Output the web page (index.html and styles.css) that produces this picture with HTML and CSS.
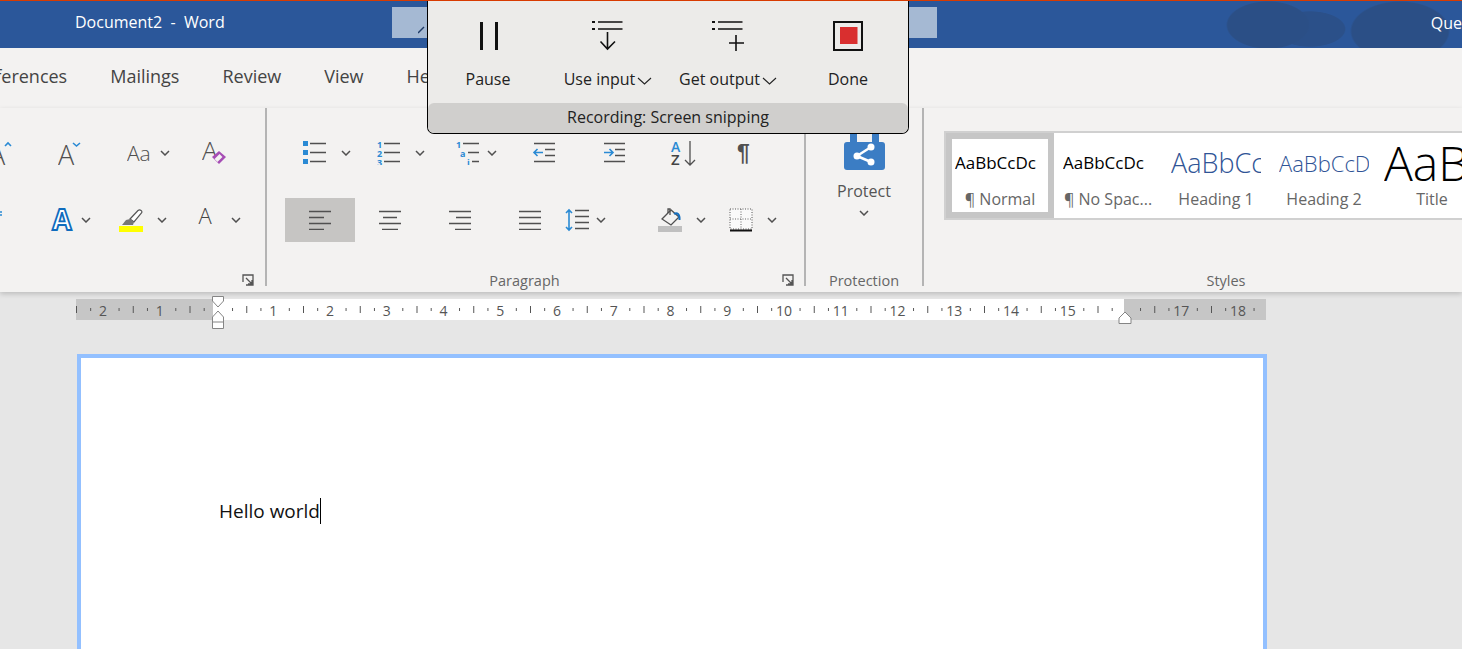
FILE: index.html
```html
<!DOCTYPE html>
<html lang="en">
<head>
    <meta charset="UTF-8">
    <meta name="viewport" content="width=device-width, initial-scale=1.0">
    <title>Document2 - Word</title>
    <link rel="stylesheet" href="styles.css">
</head>
<body>
<div class="app">

    <header class="titlebar">
        <div class="doc-title">Document2&nbsp; -&nbsp; Word</div>
        <div class="searchbox">
            <svg width="8" height="8" viewBox="0 0 8 8"><path d="M0 7 6 1" class="stroke-navy"/></svg>
        </div>
        <div class="account">Que</div>
    </header>

    <nav class="tabs">
        <span class="tab tab-first">References</span>
        <span class="tab">Mailings</span>
        <span class="tab">Review</span>
        <span class="tab">View</span>
        <span class="tab">Help</span>
    </nav>

    <section class="ribbon">

        <!-- font group, scrolled off to the left -->
        <div class="group group-font">
            <div class="row font-row-1">
                <div class="tool">
                    <svg width="12" height="24" viewBox="0 0 12 24"><text x="-11" y="24" class="glyph-a">A</text><path d="M5 5 8 2 11 5" class="stroke-blue"/></svg>
                </div>
                <div class="tool">
                    <svg width="24" height="24" viewBox="0 0 24 24"><text x="0" y="24" class="glyph-a">A</text><path d="M15 2 18.500 5 22 2" class="stroke-blue"/></svg>
                </div>
                <div class="tool tool-tight">
                    <svg width="26" height="24" viewBox="0 0 26 24"><text x="0" y="20" class="glyph-case">Aa</text></svg>
                    <svg class="chev" viewBox="0 0 10 6"><path d="M1 1 5 5 9 1"/></svg>
                </div>
                <div class="tool">
                    <svg width="26" height="26" viewBox="0 0 26 26"><text x="0" y="20" class="glyph-clear">A</text><path d="M10 17 17 11 24 17 17 24Z" class="eraser"/><path d="M14 20.500 19 15.500" class="eraser-mark"/></svg>
                </div>
            </div>
            <div class="row font-row-2">
                <div class="tool">
                    <svg width="3" height="24" viewBox="0 0 3 24"><path d="M0 4H2M0 7H2" class="stroke-blue"/></svg>
                </div>
                <div class="tool tool-tight">
                    <svg width="24" height="26" viewBox="0 0 24 26"><text x="12" y="23" class="glyph-effects">A</text></svg>
                    <svg class="chev" viewBox="0 0 10 6"><path d="M1 1 5 5 9 1"/></svg>
                </div>
                <div class="tool">
                    <svg width="24" height="24" viewBox="0 0 24 24">
                        <path d="M11 11 19 2.500C21 1 24 3 22.500 5L15 14Z" class="pen"/>
                        <path d="M3 17 7 12 11 11 15 14 14 17Z" class="pen-tip"/>
                        <rect x="0" y="18" width="24" height="6" class="fill-yellow"/>
                    </svg>
                    <svg class="chev" viewBox="0 0 10 6"><path d="M1 1 5 5 9 1"/></svg>
                </div>
                <div class="tool">
                    <svg width="24" height="24" viewBox="0 0 24 24">
                        <text x="12" y="16" class="glyph-color">A</text>
                        <rect x="0" y="18" width="24" height="6"/>
                    </svg>
                    <svg class="chev" viewBox="0 0 10 6"><path d="M1 1 5 5 9 1"/></svg>
                </div>
            </div>
            <footer class="group-foot">
                <span class="group-label"></span>
                <svg class="launcher" viewBox="0 0 12 12"><path d="M1 8V1H11V11H4M4 4 10 10M6 10H10V6"/></svg>
            </footer>
        </div>

        <div class="group group-paragraph">
            <div class="row para-row-1">
                <div class="tool">
                    <svg width="24" height="24" viewBox="0 0 24 24">
                        <path d="M0 0H5V5H0ZM0 9H5V14H0ZM0 18H5V23H0Z" class="fill-blue"/>
                        <path d="M7 2.500H23M7 11.500H23M7 20.500H23" class="stroke-line"/>
                    </svg>
                    <svg class="chev" viewBox="0 0 10 6"><path d="M1 1 5 5 9 1"/></svg>
                </div>
                <div class="tool">
                    <svg width="24" height="24" viewBox="0 0 24 24">
                        <text x="0" y="7" class="glyph-num">1</text>
                        <text x="0" y="16" class="glyph-num">2</text>
                        <text x="0" y="25" class="glyph-num">3</text>
                        <path d="M7 2.500H23M7 11.500H23M7 20.500H23" class="stroke-line"/>
                    </svg>
                    <svg class="chev" viewBox="0 0 10 6"><path d="M1 1 5 5 9 1"/></svg>
                </div>
                <div class="tool tool-tight">
                    <svg width="24" height="24" viewBox="0 0 24 24">
                        <text x="0" y="7" class="glyph-num">1</text>
                        <text x="4" y="16" class="glyph-num">a</text>
                        <text x="11" y="25" class="glyph-num">i</text>
                        <path d="M7 2.500H23M12 11.500H23M16 20.500H23" class="stroke-line"/>
                    </svg>
                    <svg class="chev" viewBox="0 0 10 6"><path d="M1 1 5 5 9 1"/></svg>
                </div>
                <div class="tool">
                    <svg width="24" height="24" viewBox="0 0 24 24">
                        <path d="M2 2.500H23M13 8.500H23M13 14.500H23M2 20.500H23" class="stroke-line"/>
                        <path d="M11 11.500H2M5.500 8 2 11.500 5.500 15" class="stroke-blue"/>
                    </svg>
                </div>
                <div class="tool">
                    <svg width="24" height="24" viewBox="0 0 24 24">
                        <path d="M2 2.500H23M13 8.500H23M13 14.500H23M2 20.500H23" class="stroke-line"/>
                        <path d="M2 11.500H11M7.500 8 11 11.500 7.500 15" class="stroke-blue"/>
                    </svg>
                </div>
                <div class="tool">
                    <svg width="26" height="25" viewBox="0 0 26 25">
                        <text x="1" y="11" class="glyph-sort-a">A</text>
                        <text x="1" y="24" class="glyph-sort-z">Z</text>
                        <path d="M20 0V24M15 19 20 24 25 19" class="stroke-line"/>
                    </svg>
                </div>
                <div class="tool">
                    <span class="pilcrow">¶</span>
                </div>
            </div>
            <div class="row para-row-2">
                <div class="align-btn align-active">
                    <svg width="22" height="20" viewBox="0 0 22 20"><path d="M0 1.500H22M0 7.500H15M0 13.500H22M0 19.500H15" class="stroke-line"/></svg>
                </div>
                <div class="align-btn">
                    <svg width="22" height="20" viewBox="0 0 22 20"><path d="M0 1.500H22M4 7.500H18M0 13.500H22M3 19.500H19" class="stroke-line"/></svg>
                </div>
                <div class="align-btn">
                    <svg width="22" height="20" viewBox="0 0 22 20"><path d="M0 1.500H22M7 7.500H22M0 13.500H22M6 19.500H22" class="stroke-line"/></svg>
                </div>
                <div class="align-btn">
                    <svg width="22" height="20" viewBox="0 0 22 20"><path d="M0 1.500H22M0 7.500H22M0 13.500H22M0 19.500H22" class="stroke-line"/></svg>
                </div>
                <div class="tool tool-tight">
                    <svg width="24" height="24" viewBox="0 0 24 24">
                        <path d="M4 2V22M1 5 4 2 7 5M1 19 4 22 7 19" class="stroke-blue"/>
                        <path d="M10 2.500H24M10 8.500H24M10 14.500H24M10 20.500H24" class="stroke-line"/>
                    </svg>
                    <svg class="chev" viewBox="0 0 10 6"><path d="M1 1 5 5 9 1"/></svg>
                </div>
                <div class="tool">
                    <svg width="24" height="24" viewBox="0 0 24 24">
                        <path d="M4 11 13 2 21 9 13 17Z" class="stroke-line"/>
                        <path d="M10 5V1H12V7" class="stroke-line"/>
                        <path d="M16 6C19 4 22 6 21.500 12" class="stroke-curl"/>
                        <rect x="0" y="18" width="24" height="6" class="fill-grey"/>
                    </svg>
                    <svg class="chev" viewBox="0 0 10 6"><path d="M1 1 5 5 9 1"/></svg>
                </div>
                <div class="tool">
                    <svg width="24" height="24" viewBox="0 0 24 24">
                        <rect x="1" y="1" width="22" height="20" class="box-dotted"/>
                        <path d="M12 1V21M1 11H23" class="stroke-dotted"/>
                        <path d="M1 22.500H23" class="stroke-black"/>
                    </svg>
                    <svg class="chev" viewBox="0 0 10 6"><path d="M1 1 5 5 9 1"/></svg>
                </div>
            </div>
            <footer class="group-foot">
                <span class="group-label">Paragraph</span>
                <svg class="launcher" viewBox="0 0 12 12"><path d="M1 8V1H11V11H4M4 4 10 10M6 10H10V6"/></svg>
            </footer>
        </div>

        <div class="group group-protection">
            <div class="protect">
                <svg width="41" height="41" viewBox="0 0 41 41">
                    <path d="M6 12V0H13V12M28 12V0H35V12" class="fill-lock"/>
                    <rect x="0" y="12" width="41" height="28" rx="3" class="fill-lock"/>
                    <path d="M13 26 27 17M13 26 27 32" class="stroke-share"/>
                    <circle cx="13" cy="26" r="3.500" class="fill-white"/>
                    <circle cx="27" cy="17" r="3.500" class="fill-white"/>
                    <circle cx="27" cy="32" r="3.500" class="fill-white"/>
                </svg>
                <span class="protect-label">Protect</span>
                <svg class="chev" viewBox="0 0 10 6"><path d="M1 1 5 5 9 1"/></svg>
            </div>
            <footer class="group-foot">
                <span class="group-label">Protection</span>
            </footer>
        </div>

        <div class="group group-styles">
            <div class="gallery">
                <div class="style-cell style-selected">
                    <div class="style-preview preview-body">AaBbCcDc</div>
                    <div class="style-name">¶ Normal</div>
                </div>
                <div class="style-cell">
                    <div class="style-preview preview-body">AaBbCcDc</div>
                    <div class="style-name">¶ No Spac...</div>
                </div>
                <div class="style-cell">
                    <div class="style-preview preview-h1">AaBbCcD</div>
                    <div class="style-name">Heading 1</div>
                </div>
                <div class="style-cell">
                    <div class="style-preview preview-h2">AaBbCcDc</div>
                    <div class="style-name">Heading 2</div>
                </div>
                <div class="style-cell">
                    <div class="style-preview preview-title">AaB</div>
                    <div class="style-name">Title</div>
                </div>
            </div>
            <footer class="group-foot">
                <span class="group-label">Styles</span>
            </footer>
        </div>
    </section>

    <main class="workspace">
        <div class="ruler">
            <span class="rn">2</span><span class="rn">1</span><span class="rn"></span><span class="rn">1</span><span class="rn">2</span><span class="rn">3</span><span class="rn">4</span><span class="rn">5</span><span class="rn">6</span><span class="rn">7</span><span class="rn">8</span><span class="rn">9</span><span class="rn">10</span><span class="rn">11</span><span class="rn">12</span><span class="rn">13</span><span class="rn">14</span><span class="rn">15</span><span class="rn"></span><span class="rn">17</span><span class="rn">18</span>

            <svg class="marker-left" width="14" height="33" viewBox="0 0 14 33">
                <path d="M1.500 .5H12.500V5L7 11 1.500 5Z" class="marker"/>
                <path d="M7 15 12.500 21V32.500H1.500V21Z" class="marker"/>
                <path d="M1.500 26H12.500" class="marker"/>
            </svg>
            <svg class="marker-right" width="14" height="13" viewBox="0 0 14 13">
                <path d="M7 1 13 7V12.500H1V7Z" class="marker"/>
            </svg>
        </div>

        <div class="page">
            <span class="page-text">Hello world</span>
        </div>
    </main>

    <!-- floating recorder bar sits over the ribbon -->
    <aside class="recorder">
        <div class="recorder-btns">
            <div class="rec-btn">
                <svg width="32" height="32" viewBox="0 0 32 32"><path d="M8 2H11V30H8ZM23 2H26V30H23Z" class="fill-black"/></svg>
                <span class="rec-label">Pause</span>
            </div>
            <div class="rec-btn">
                <svg width="32" height="32" viewBox="0 0 32 32">
                    <path d="M0 1H3V3H0ZM0 8H3V10H0Z" class="fill-black"/>
                    <path d="M6 2H30.500M6 9H30.500M15.500 12V29M8.500 21.500 15.500 29 23 21.500" class="stroke-rec"/>
                </svg>
                <span class="rec-label">Use input<svg class="rec-chev" viewBox="0 0 15 8"><path d="M1 1 7.500 7 14 1"/></svg></span>
            </div>
            <div class="rec-btn">
                <svg width="32" height="32" viewBox="0 0 32 32">
                    <path d="M0 1H3V3H0ZM0 8H3V10H0Z" class="fill-black"/>
                    <path d="M6 2H30.500M6 9H30.500M24 15V31M17 23H32" class="stroke-rec"/>
                </svg>
                <span class="rec-label">Get output<svg class="rec-chev" viewBox="0 0 15 8"><path d="M1 1 7.500 7 14 1"/></svg></span>
            </div>
            <div class="rec-btn">
                <svg width="32" height="32" viewBox="0 0 32 32">
                    <rect x="2" y="2" width="28" height="28" class="done-box"/>
                    <rect x="8" y="7" width="17.500" height="17" class="fill-red"/>
                </svg>
                <span class="rec-label">Done</span>
            </div>
        </div>
        <div class="recorder-status">Recording: Screen snipping</div>
    </aside>

</div>
</body>
</html>
```

FILE: styles.css
```css
html, body {
    margin: 0;
    height: 100%;
}

body {
    font-family: "Open Sans", "Noto Sans", sans-serif;
    background-color: #e6e6e6;
    color: #444;
}

.app {
    position: relative;
    height: 100vh;
    overflow: hidden;
}

svg {
    display: block;
    flex: none;
    fill: none;
}

/* title bar */
.titlebar {
    display: flex;
    height: 47px;
    border-top: 1px solid #d83b01;
    color: #fff;
    background:
        radial-gradient(ellipse 42px 24px at 1268px 24px, #2b4f86 96%, transparent),
        radial-gradient(ellipse 36px 18px at 1310px 28px, #2b5089 96%, transparent),
        radial-gradient(ellipse 50px 30px at 1400px 30px, #2b4f86 96%, transparent),
        #2b579a;
}

.doc-title {
    width: 319px;
    margin-left: 75px;
    font-size: 16px;
    line-height: 42px;
}

.searchbox {
    display: flex;
    align-items: flex-end;
    width: 548px;
    height: 31px;
    margin-top: 6px;
    padding: 0 0 4px 26px;
    box-sizing: border-box;
    background-color: #a5b9d3;
}

.account {
    margin-left: 494px;
    font-size: 16px;
    line-height: 44px;
}

/* tabs */
.tabs {
    display: flex;
    gap: 43px;
    height: 60px;
    background-color: #f3f2f1;
    font-size: 18px;
    line-height: 56px;
    white-space: nowrap;
}

.tab-first {
    margin-left: -26px;
}

/* ribbon */
.ribbon {
    display: flex;
    height: 184px;
    padding-bottom: 0;
    box-sizing: border-box;
    background-color: #f3f2f1;
    box-shadow: 0 2px 5px rgba(0, 0, 0, 0.18);
    position: relative;
}

.group {
    display: flex;
    flex: none;
    flex-direction: column;
    box-sizing: border-box;
    height: 178px;
    padding-top: 22px;
    border-right: 2px solid #b4b4b4;
}

.group-font { width: 267px; }
.group-paragraph { width: 539px; }
.group-protection { width: 118px; }
.group-styles { width: 604px; border-right: 0; }

.row {
    display: grid;
    align-items: center;
}

.font-row-1, .para-row-1 { height: 46px; }
.font-row-2, .para-row-2 { height: 44px; margin-top: 22px; }

.font-row-1 { grid-template-columns: 58px 69px 75px 1fr; }
.font-row-2 { grid-template-columns: 50px 69px 74px 1fr; }
.para-row-1 { grid-template-columns: 74px 79px 76px 70px 68px 75px 1fr; padding-left: 36px; }
.para-row-2 { grid-template-columns: 70px 70px 70px 70px 93px 71px 1fr; padding-left: 18px; }

.tool {
    display: flex;
    align-items: center;
    gap: 14px;
}

.tool-tight { gap: 7px; }

.para-row-2 .tool:first-of-type { margin-left: 23px; }

.align-btn {
    display: flex;
    align-items: center;
    justify-content: center;
    height: 44px;
}

.align-active {
    background-color: #c6c5c3;
}

.chev {
    width: 10px;
    height: 6px;
}

.chev path {
    stroke: #505050;
    stroke-width: 1.5;
}

.group-foot {
    display: flex;
    align-items: center;
    margin-top: auto;
    height: 16px;
    margin-bottom: -2px;
}

.group-label {
    flex: 1;
    text-align: center;
    font-size: 14.5px;
    color: #666;
}

.launcher {
    width: 12px;
    height: 12px;
    margin-right: 10px;
}

.launcher path {
    stroke: #555;
    stroke-width: 1.3;
}

.group-font .launcher { margin-right: 11px; }

/* icon pieces */
.stroke-navy { stroke: #1f3b66; stroke-width: 1.5; }
.stroke-blue { stroke: #2a8ad4; stroke-width: 1.6; fill: none; }
.stroke-line { stroke: #505050; stroke-width: 1.3; fill: none; }
.stroke-curl { stroke: #1570c0; stroke-width: 2; fill: none; }
.stroke-black { stroke: #111; stroke-width: 2; }
.stroke-dotted { stroke: #666; stroke-width: 1; stroke-dasharray: 1 1.5; }
.stroke-share { stroke: #fff; stroke-width: 2.5; }
.stroke-rec { stroke: #111; stroke-width: 1.6; fill: none; }
.fill-blue { fill: #2a8ad4; }
.fill-yellow { fill: #ffff00; }
.fill-grey { fill: #c0c0c0; }
.fill-black { fill: #111; }
.fill-red { fill: #d92f2f; }
.fill-white { fill: #fff; }
.fill-lock { fill: #3b7dc4; }
.box-dotted { fill: #fafafa; stroke: #555; stroke-width: 1; stroke-dasharray: 1 1.5; }
.done-box { stroke: #111; stroke-width: 2; }
.eraser { fill: #a64db5; }
.eraser-mark { stroke: #f3f2f1; stroke-width: 4; }
.pen { fill: #fff; stroke: #555; stroke-width: 1.2; }
.pen-tip { fill: #777; }

.glyph-a { font-size: 27px; font-weight: 300; fill: #505050; }
.glyph-case { font-size: 21px; font-weight: 300; fill: #505050; }
.glyph-clear { font-size: 26px; font-weight: 300; fill: #505050; }
.glyph-color { font-size: 22px; font-weight: 300; fill: #444; text-anchor: middle; }
.glyph-effects {
    font-size: 28px;
    font-weight: 700;
    text-anchor: middle;
    fill: #fff;
    stroke: #0f6cbd;
    stroke-width: 1.8;
}
.glyph-num { font-size: 9px; font-weight: 700; fill: #2a8ad4; }
.glyph-sort-a { font-size: 14px; font-weight: 600; fill: #2a8ad4; }
.glyph-sort-z { font-size: 15px; font-weight: 600; fill: #444; }

.pilcrow {
    margin-left: -8px;
    font-family: "Liberation Sans", sans-serif;
    font-size: 23px;
    font-weight: 700;
    color: #505050;
}

/* protect */
.protect {
    display: flex;
    flex-direction: column;
    align-items: center;
}

.protect-label {
    margin-top: 7px;
    font-size: 16px;
    line-height: 26px;
    color: #555;
}

.protect .chev { margin-top: 6px; }

/* styles gallery */
.gallery {
    display: flex;
    height: 89px;
    margin: 1px 0 0 20px;
    box-sizing: border-box;
    border: 2px solid #d0d0d0;
    border-right: 0;
    background-color: #fff;
}

.style-cell {
    flex: none;
    box-sizing: border-box;
    width: 108px;
    height: 85px;
    border: 6px solid transparent;
}

.style-selected {
    border-color: #c6c6c6;
}

.style-preview {
    width: 90px;
    height: 48px;
    margin: 0 auto;
    overflow: hidden;
    white-space: nowrap;
    line-height: 48px;
    color: #000;
}

.preview-body { font-size: 17px; }
.preview-h1 { font-size: 27px; font-weight: 300; color: #2f5496; }
.preview-h2 { font-size: 22px; font-weight: 300; color: #2f5496; }
.preview-title { font-size: 48px; font-weight: 300; width: 96px; }

.style-name {
    font-size: 16px;
    line-height: 25px;
    text-align: center;
    white-space: nowrap;
    color: #666;
}

/* workspace */
.workspace {
    padding: 7px 0 0 76px;
}

.ruler {
    position: relative;
    display: flex;
    width: 1190px;
    height: 21px;
    background:
        linear-gradient(90deg, #555 1px, transparent 1px) 0 center / 56.75px 7px repeat-x,
        linear-gradient(90deg, #555 1px, transparent 1px) 14.2px center / 28.375px 3px repeat-x,
        linear-gradient(90deg, #c6c6c6 137px, #fff 137px, #fff 1048px, #c6c6c6 1048px);
}

.rn {
    flex: none;
    width: 56.75px;
    font-size: 14px;
    line-height: 23px;
    text-align: center;
    color: #555;
}

.rn:first-child { margin-left: -1.4px; }

.marker-left {
    position: absolute;
    left: 135px;
    top: -3px;
}

.marker-right {
    position: absolute;
    left: 1042px;
    top: 12px;
}

.marker {
    fill: #fff;
    stroke: #858585;
    stroke-width: 1;
}

.page {
    width: 1182px;
    height: 400px;
    margin: 34px 0 0 1px;
    padding: 140px 0 0 138px;
    box-sizing: content-box;
    border: 4px solid #93c0ff;
    background-color: #fff;
    width: 1044px;
}

.page-text {
    display: inline-block;
    font-size: 19px;
    line-height: 26px;
    color: #111;
    border-right: 1px solid #000;
}

/* recorder bar */
.recorder {
    position: absolute;
    top: 1px;
    left: 427px;
    width: 482px;
    height: 133px;
    box-sizing: border-box;
    border: 1px solid #000;
    border-top: 0;
    border-radius: 0 0 7px 7px;
    background-color: #ecebe9;
    color: #222;
}

.recorder-btns {
    display: grid;
    grid-template-columns: repeat(4, 120px);
    height: 102px;
}

.rec-btn {
    display: flex;
    flex-direction: column;
    align-items: center;
    padding-top: 19px;
}

.rec-label {
    display: flex;
    align-items: center;
    margin-top: 16px;
    font-size: 16px;
    line-height: 22px;
    white-space: nowrap;
}

.rec-chev {
    width: 15px;
    height: 8px;
    margin: 3px 0 0 2px;
}

.rec-chev path {
    stroke: #222;
    stroke-width: 1.1;
}

.recorder-status {
    height: 30px;
    border-radius: 6px;
    background-color: #d0cfcd;
    font-size: 16px;
    line-height: 29px;
    text-align: center;
}
```
